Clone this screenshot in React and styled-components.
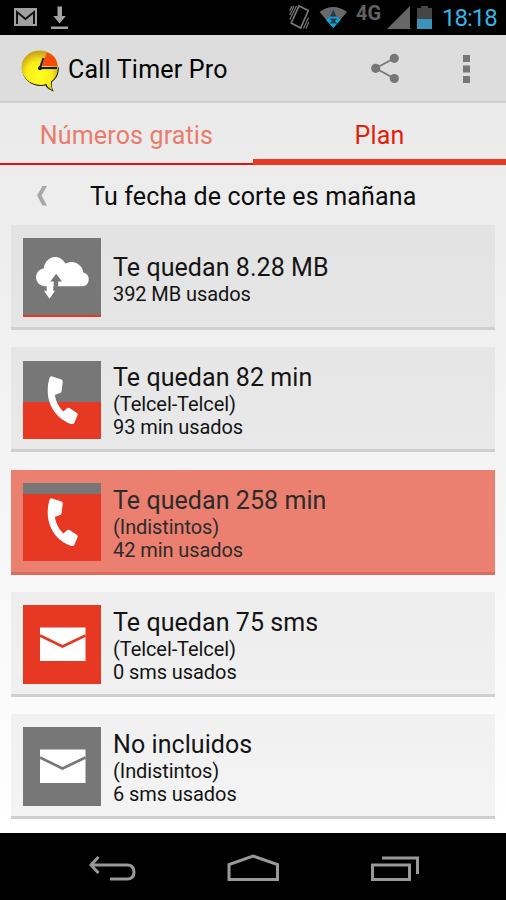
import React from "react";
import styled, { createGlobalStyle } from "styled-components";

const Global = createGlobalStyle`
  * { box-sizing: border-box; }
  html, body { margin: 0; padding: 0; }
  body { background: #000; font-family: Roboto, "Liberation Sans", sans-serif; color: #151515; }
  svg { display: block; flex: none; }
`;

const Screen = styled.div`
  width: 506px;
  height: 900px;
  display: flex;
  flex-direction: column;
  overflow: hidden;
  background: #000;
`;

const StatusBar = styled.header`
  height: 35px;
  flex: none;
  display: flex;
  align-items: flex-start;
  background: #000;
  padding: 0 9px 0 14px;
`;

const StatusGroup = styled.div`
  display: flex;
  align-items: flex-start;
  height: 35px;
  margin-left: ${(p) => (p.$end ? "auto" : 0)};
`;

const Network = styled.span`
  width: 31px;
  margin-left: 9px;
  padding-top: 2px;
  font-size: 20px;
  line-height: 22px;
  font-weight: 700;
  color: #626262;
`;

const Clock = styled.time`
  width: 55px;
  margin-left: 10px;
  white-space: nowrap;
  font-size: 24px;
  line-height: 36px;
  letter-spacing: -1px;
  color: #33b5e5;
`;

const ActionBar = styled.div`
  height: 68px;
  flex: none;
  display: flex;
  align-items: center;
  padding: 1px 35px 0 20px;
  background: #ddd;
  border-bottom: 2px solid #cecece;
`;

const AppTitle = styled.h1`
  margin: 2px 0 0 6px;
  flex: 1;
  font-size: 25px;
  line-height: 30px;
  font-weight: 400;
  letter-spacing: 0.2px;
  color: #000;
`;

const Content = styled.main`
  height: 730px;
  flex: none;
  display: flex;
  flex-direction: column;
  background: linear-gradient(#eaeaea, #ffffff);
`;

const Tabs = styled.nav`
  display: flex;
  height: 62px;
`;

const Tab = styled.div`
  flex: 1;
  padding-top: 18px;
  text-align: center;
  font-size: 25px;
  line-height: 30px;
  letter-spacing: 0.15px;
  color: ${(p) => (p.$active ? "#e71d08" : "#ea7b6c")};
  border-bottom: ${(p) => (p.$active ? "6px solid #e63822" : "2px solid #e8100c")};
`;

const Heading = styled.div`
  display: flex;
  align-items: center;
  height: 60px;
  padding: 2px 0 0 36px;
  color: #0c0c0c;
`;

const HeadingText = styled.h2`
  margin: 2px 0 0 42px;
  font-size: 25px;
  line-height: 30px;
  font-weight: 400;
  letter-spacing: 0.15px;
`;

const List = styled.div`
  display: flex;
  flex-direction: column;
  gap: 17.3px;
  padding: 0 11px;
`;

const Card = styled.article`
  height: 105px;
  display: flex;
  align-items: center;
  gap: 12px;
  padding: 0 11px 0 11.5px;
  background: ${(p) => (p.$selected ? "#eb8070" : "rgba(0, 0, 0, 0.045)")};
  border-bottom: 3px solid ${(p) => (p.$selected ? "#dc6c5d" : "#cfcfcf")};
`;

const Meter = styled.div`
  width: 78.5px;
  height: 78.5px;
  flex: none;
  margin-top: 3px;
  background: linear-gradient(#777 ${(p) => p.$gray}px, #e63822 ${(p) => p.$gray}px);
`;

const CardText = styled.div`
  padding-top: 6px;
  white-space: nowrap;
  color: ${(p) => (p.$selected ? "#2b2b2b" : "#141414")};
`;

const CardTitle = styled.div`
  font-size: 25px;
  line-height: 30px;
  letter-spacing: 0.07px;
`;

const CardLine = styled.div`
  font-size: 20px;
  line-height: 23px;
  letter-spacing: -0.08px;
`;

const NavBar = styled.footer`
  flex: 1;
  display: flex;
  align-items: flex-start;
  padding-left: 89px;
  background: #000;
`;

const NavSlot = styled.div`
  width: ${(p) => p.$w}px;
  padding-top: 20.5px;
`;

const MailStatus = () => (
  <svg width="23" height="35" viewBox="0 0 23 35">
    <rect y="8" width="23" height="18" fill="#a0a0a0" />
    <path d="M3 24V12L11.500 19L20 12V24" fill="none" stroke="#111" strokeWidth="2" />
  </svg>
);

const Download = () => (
  <svg width="32" height="35" viewBox="0 0 32 35">
    <path d="M20.500 6.500h4.500V16H28.800L22.600 23.500L16.300 16H20.500zM14 26.500h17v2.500H14z" fill="#a3a3a3" />
  </svg>
);

const Vibrate = () => (
  <svg width="21" height="35" viewBox="0 0 21 35" fill="none" stroke="#777" strokeWidth="1.500">
    <path d="M10 6L19.300 10.500L11.700 28L2.200 23z" strokeWidth="1.700" />
    <path d="M.8 10.500L3 6M.8 15L5 6M.8 19.500L7.500 6M14.500 28.500L19.500 17.500M17 28.500L19.800 22" strokeWidth="1.200" />
  </svg>
);

const Wifi = () => (
  <svg width="37" height="35" viewBox="0 0 37 35">
    <path d="M9.500 12Q23.300 2 37 12L23.300 28z" fill="#696969" />
    <path d="M16 20L19.500 17H27.500L30.500 20L23.300 28z" fill="#0aa5df" />
    <path d="M23.300 9.500L26.500 16.500H20zM19.500 18.500H27.500L25 21L27.500 23.500H19.500L22 21z" fill="#293c45" />
  </svg>
);

const Signal = () => (
  <svg width="23" height="35" viewBox="0 0 23 35">
    <path d="M0 29L23 6V29z" fill="#676767" />
  </svg>
);

const Battery = () => (
  <svg width="22" height="35" viewBox="0 0 22 35">
    <path d="M7 8h4V6h7v2h4v11H7z" fill="#454545" />
    <path d="M7 19h15v10H7z" fill="#3a94b9" />
  </svg>
);

const LogoSlot = styled.div`
  margin-top: 4px;
`;

const Logo = () => (
  <svg width="42" height="44" viewBox="0 0 42 44">
    <defs>
      <radialGradient id="bubble" cx=".48" cy=".62" r=".58">
        <stop offset="0" stopColor="#ffff20" />
        <stop offset=".6" stopColor="#fced16" />
        <stop offset="1" stopColor="#cba71c" />
      </radialGradient>
    </defs>
    <path d="M38.800 18C39 26 36 30 32 33Q31 38 33.800 42.500Q27 40 25.500 36.500C13 39 4 31 2.500 23" fill="#231900" />
    <path d="M20 1.500C30 1.500 38 8.500 38 18C38 25 35 30 31 32.500Q30.500 37 32.500 41Q27.500 39 26.500 35C14 39 1.500 30 1.500 18.500C1.500 9 9 1.500 20 1.500z" fill="url(#bubble)" />
    <path d="M27 3.500C34 6 37 11 37.500 17H21.500z" fill="#f84b0b" />
    <path d="M20 19H37" stroke="#151515" strokeWidth="2.200" />
    <path d="M19.700 19.500L23.500 9" stroke="#151515" strokeWidth="2" />
    <circle cx="20" cy="19.300" r="2" fill="#151515" />
  </svg>
);

const Share = () => (
  <svg width="28" height="31" viewBox="1 0 28 31" fill="#777">
    <path d="M24.300 5.300L5.700 15.300L24.300 25.500" fill="none" stroke="#777" strokeWidth="1.800" />
    <circle cx="24.300" cy="5.300" r="4.600" />
    <circle cx="5.700" cy="15.300" r="4.600" />
    <circle cx="24.300" cy="25.500" r="4.600" />
  </svg>
);

const Overflow = () => (
  <svg width="72" height="30" viewBox="0 0 72 30" fill="#777">
    <rect x="64" y="1" width="7" height="7" />
    <rect x="64" y="11.500" width="7" height="7" />
    <rect x="64" y="22" width="7" height="7" />
  </svg>
);

const Chevron = () => (
  <svg width="12" height="22" viewBox="0 0 12 22">
    <path d="M6.500 1H11L5.500 10.500L11 20.500H6.500L1 10.500z" fill="#a8a8a8" />
  </svg>
);

const CloudGlyph = () => (
  <svg width="78.500" height="78.500" viewBox="0 0 78.500 78.500">
    <path d="M21 48.200A9 9 0 0 1 21 30.300A11.300 11.300 0 0 1 42.500 25.500A12 12 0 0 1 60.300 34.500A7 7 0 0 1 60 48.200z" fill="#fff" />
    <path d="M23.700 47.500h6.600v5.200H32L26.500 60.700L21 52.700h2.700z" fill="#fff" />
    <path d="M30.700 48.700V43.500H27.300L33.200 35.700L39 43.500H35.200V48.700z" fill="#777" />
  </svg>
);

const PhoneGlyph = () => (
  <svg width="78.500" height="78.500" viewBox="0 0 78.500 78.500">
    <path d="M28.500 15.200L38.500 18.500Q40 19.300 39.700 21L38.500 30.500Q38.300 31.500 37 32L31.800 34Q33.500 44 40.300 50.500L44.500 47Q45.500 46.400 46.500 47L54 52Q55 53 54.600 54L51.500 61.500Q50.500 63.500 48 63C33 57.500 24.500 44 24.700 29Q24.800 22 26.500 17Q27.200 15 28.500 15.200z" fill="#fff" />
  </svg>
);

const MailGlyph = ({ line }) => (
  <svg width="78.500" height="78.500" viewBox="0 0 78.500 78.500">
    <rect x="17" y="22.500" width="45.500" height="33.500" fill="#fff" />
    <path d="M17 30.500L39.500 41.500L62.500 30.500" fill="none" stroke={line} strokeWidth="2.600" />
  </svg>
);

const plans = [
  { title: "Te quedan 8.28 MB", lines: ["392 MB usados"], gray: 77, glyph: <CloudGlyph /> },
  { title: "Te quedan 82 min", lines: ["(Telcel-Telcel)", "93 min usados"], gray: 41, glyph: <PhoneGlyph /> },
  { title: "Te quedan 258 min", lines: ["(Indistintos)", "42 min usados"], gray: 10.5, glyph: <PhoneGlyph />, selected: true },
  { title: "Te quedan 75 sms", lines: ["(Telcel-Telcel)", "0 sms usados"], gray: 0, glyph: <MailGlyph line="#e63822" /> },
  { title: "No incluidos", lines: ["(Indistintos)", "6 sms usados"], gray: 79, glyph: <MailGlyph line="#777" /> },
];

export default function App() {
  return (
    <Screen>
      <Global />
      <StatusBar>
        <StatusGroup>
          <MailStatus />
          <Download />
        </StatusGroup>
        <StatusGroup $end>
          <Vibrate />
          <Wifi />
          <Network>4G</Network>
          <Signal />
          <Battery />
          <Clock>18:18</Clock>
        </StatusGroup>
      </StatusBar>
      <ActionBar>
        <LogoSlot>
          <Logo />
        </LogoSlot>
        <AppTitle>Call Timer Pro</AppTitle>
        <Share />
        <Overflow />
      </ActionBar>
      <Content>
        <Tabs>
          <Tab>Números gratis</Tab>
          <Tab $active>Plan</Tab>
        </Tabs>
        <Heading>
          <Chevron />
          <HeadingText>Tu fecha de corte es mañana</HeadingText>
        </Heading>
        <List>
          {plans.map((plan, i) => (
            <Card key={i} $selected={plan.selected}>
              <Meter $gray={plan.gray}>{plan.glyph}</Meter>
              <CardText $selected={plan.selected}>
                <CardTitle>{plan.title}</CardTitle>
                {plan.lines.map((line) => (
                  <CardLine key={line}>{line}</CardLine>
                ))}
              </CardText>
            </Card>
          ))}
        </List>
      </Content>
      <NavBar>
        <NavSlot $w={137}>
          <svg width="48" height="30" viewBox="0 0 48 30" fill="none" stroke="#999" strokeWidth="3">
            <path d="M2 11H38Q45 11 45 18T38 25H21" />
            <path d="M9.500 3L2 11L9.500 19" />
          </svg>
        </NavSlot>
        <NavSlot $w={144}>
          <svg width="54" height="30" viewBox="0 0 54 30" fill="none" stroke="#999" strokeWidth="3">
            <path d="M3 25.500V10.500L27 2L51.500 10.500V25.500z" />
          </svg>
        </NavSlot>
        <NavSlot $w={50}>
          <svg width="50" height="30" viewBox="0 0 50 30" fill="none" stroke="#999" strokeWidth="3">
            <path d="M2.500 11H39.500V25.500H2.500zM12 4H47.500V20" />
          </svg>
        </NavSlot>
      </NavBar>
    </Screen>
  );
}
